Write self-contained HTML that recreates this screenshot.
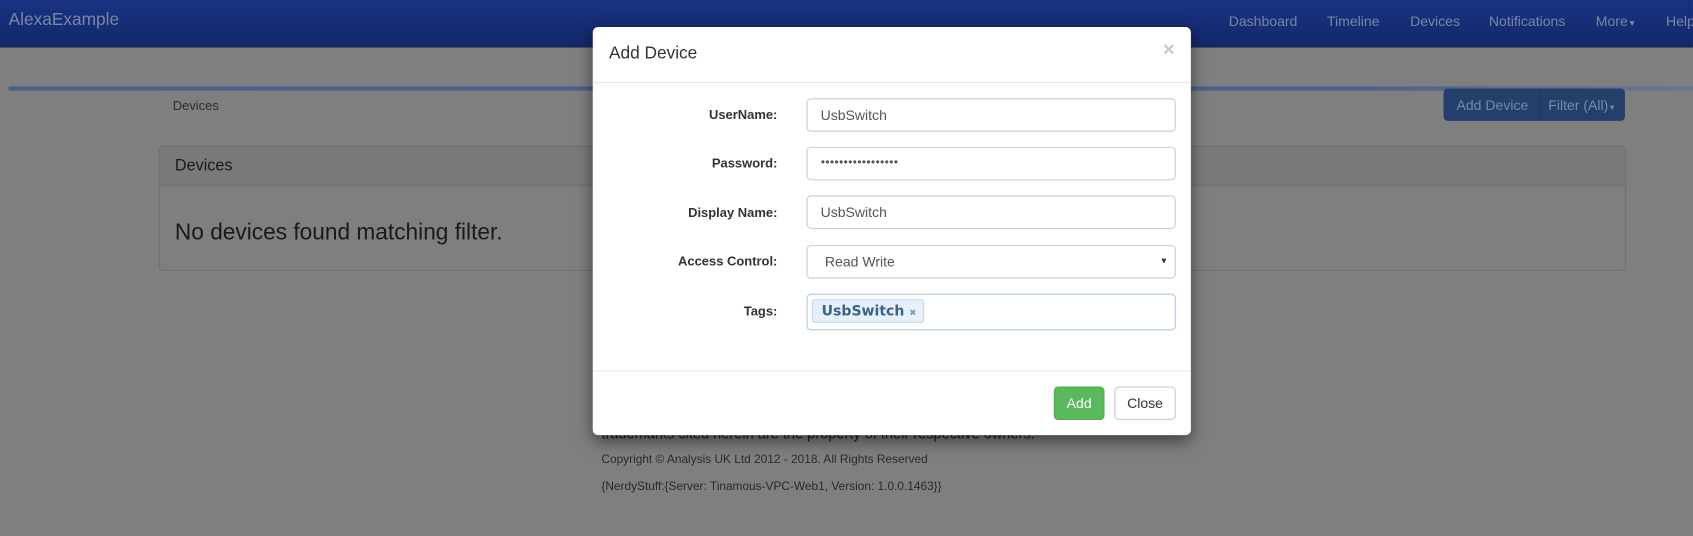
<!DOCTYPE html>
<html><head><meta charset="utf-8"><style>
html,body{margin:0;padding:0;width:1693px;height:535px;overflow:hidden;background:#7f7f7f;}
#w{position:absolute;left:0;top:0;width:1568px;height:496px;transform:scale(1.0797);transform-origin:0 0;font-family:"Liberation Sans",Arial,sans-serif;color:#1a1a1a;}
.a{position:absolute;}
.nav{left:0;top:0;width:1568px;height:43px;background:linear-gradient(#1a3382,#13286a);border-bottom:1px solid #0f2050;}
.nav span{position:absolute;top:12px;font-size:13px;color:#7a86a3;}
.lbl{font-size:12px;font-weight:bold;color:#333;text-align:right;width:171px;left:0;}
.in{left:198px;width:342px;height:31px;border:1px solid #ccc;border-radius:4px;box-sizing:border-box;font-size:13px;color:#555;padding:7px 12px;}
</style></head><body><div id="w">
<div class="a nav">
<span style="left:8px;font-size:16px;top:10px;">AlexaExample</span>
<span style="left:1138px">Dashboard</span>
<span style="left:1229px">Timeline</span>
<span style="left:1306px">Devices</span>
<span style="left:1379px">Notifications</span>
<span style="left:1478px">More<span style="position:static;font-size:8px">▼</span></span>
<span style="left:1543px">Help</span>
</div>
<div class="a" style="left:8px;top:80px;width:1560px;height:4px;background:linear-gradient(90deg,#4a5f8c,#4d6190 80%,#6a7590);"></div>
<div class="a" style="left:160px;top:91px;font-size:12px;color:#2e2e2e;">Devices</div>
<div class="a" style="left:1337px;top:82px;width:168px;height:30px;background:#22406a;border-radius:4px;font-size:13px;color:#7a8aa2;">
<span class="a" style="left:12px;top:8px">Add Device</span>
<div class="a" style="left:88px;top:0;width:1px;height:30px;background:#1e3a60"></div>
<span class="a" style="left:97px;top:8px">Filter (All)<span style="font-size:7px">▼</span></span></div>
<div class="a" style="left:147px;top:135px;width:1357px;height:114px;border:1px solid #6f6f6f;border-radius:4px;">
<div class="a" style="left:0;top:0;width:1357px;height:35px;background:#7a7a7a;border-bottom:1px solid #6f6f6f;font-size:15px;"><span class="a" style="left:14px;top:9px">Devices</span></div>
<div class="a" style="left:14px;top:68px;font-size:21px;">No devices found matching filter.</div></div>
<div class="a" style="left:557px;top:394px;font-size:13.5px;color:#1a1a1a;">trademarks cited herein are the property of their respective owners.</div>
<div class="a" style="left:557px;top:420px;font-size:11px;color:#2a2a2a;">Copyright © Analysis UK Ltd 2012 - 2018. All Rights Reserved</div>
<div class="a" style="left:557px;top:445px;font-size:11px;color:#2a2a2a;">{NerdyStuff:{Server: Tinamous-VPC-Web1, Version: 1.0.0.1463}}</div>

<div class="a" style="left:549px;top:25px;width:554px;height:378px;background:#fff;border-radius:5px;box-shadow:0 5px 15px rgba(0,0,0,.5);">
<div class="a" style="left:15px;top:16px;font-size:16px;color:#333;">Add Device</div>
<div class="a" style="right:15px;top:11px;font-size:19px;font-weight:bold;color:#c8c8c8;">×</div>
<div class="a" style="left:0;top:51px;width:554px;height:1px;background:#e5e5e5"></div>
<div class="a lbl" style="top:74px">UserName:</div>
<div class="a in" style="top:66px">UsbSwitch</div>
<div class="a lbl" style="top:119px">Password:</div>
<div class="a in" style="top:111px;font-size:7px;padding-top:10px;letter-spacing:0">●●●●●●●●●●●●●●●●●</div>
<div class="a lbl" style="top:165px">Display Name:</div>
<div class="a in" style="top:156px">UsbSwitch</div>
<div class="a lbl" style="top:210px">Access Control:</div>
<div class="a in" style="top:202px;padding-left:16px">Read Write<span class="a" style="right:6px;top:9px;font-size:8px;color:#333">▼</span></div>
<div class="a lbl" style="top:256px">Tags:</div>
<div class="a in" style="top:247px;height:34px;border-color:#a8c8e6;padding:4px;">
<div style="display:inline-block;background:#e6f0fa;border:1px solid #c4d8ee;border-radius:3px;padding:3px 6px 2px 8px;font-family:'DejaVu Sans',sans-serif;font-weight:bold;font-size:13px;color:#3c6289;">UsbSwitch <span style="font-size:8px;color:#7a9cc0">✖</span></div></div>
<div class="a" style="left:0;top:318px;width:554px;height:1px;background:#e5e5e5"></div>
<div class="a" style="left:427px;top:333px;width:47px;height:31px;background:#5cb85c;border:1px solid #4cae4c;border-radius:4px;box-sizing:border-box;color:#fff;font-size:13px;text-align:center;line-height:29px;">Add</div>
<div class="a" style="left:483px;top:333px;width:57px;height:31px;background:#fff;border:1px solid #ccc;border-radius:4px;box-sizing:border-box;color:#333;font-size:13px;text-align:center;line-height:29px;">Close</div>
</div>
</div></body></html>
